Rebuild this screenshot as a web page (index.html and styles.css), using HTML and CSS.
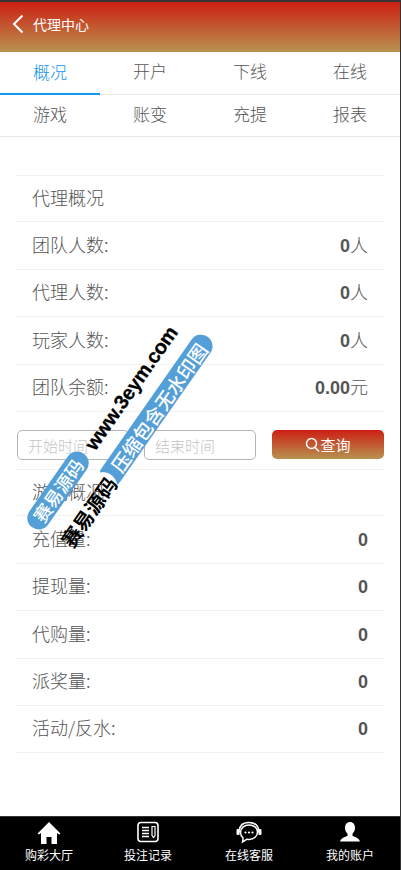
FILE: index.html
```html
<!DOCTYPE html>
<html lang="zh">
<head>
<meta charset="utf-8">
<title>代理中心</title>
<link rel="stylesheet" href="styles.css">
</head>
<body>
<div class="app">
  <header class="header">
    <svg class="back" width="12" height="20" viewBox="0 0 12 20"><path d="M10.500 1.500 2 10l8.500 8.500" fill="none" stroke="#fff" stroke-width="2"/></svg>
    <span class="title">代理中心</span>
  </header>
  <nav class="tabs">
    <a class="tab active">概况</a><a class="tab">开户</a><a class="tab">下线</a><a class="tab">在线</a>
  </nav>
  <nav class="tabs second">
    <a class="tab">游戏</a><a class="tab">账变</a><a class="tab">充提</a><a class="tab">报表</a>
  </nav>
  <main class="content">
    <div class="row heading"><span>代理概况</span></div>
    <div class="row"><span>团队人数:</span><span class="val"><b>0</b>人</span></div>
    <div class="row"><span>代理人数:</span><span class="val"><b>0</b>人</span></div>
    <div class="row"><span>玩家人数:</span><span class="val"><b>0</b>人</span></div>
    <div class="row"><span>团队余额:</span><span class="val"><b>0.00</b>元</span></div>
    <div class="filter">
      <input class="date" placeholder="开始时间">
      <input class="date" placeholder="结束时间">
      <button class="query">
        <svg width="15" height="16" viewBox="0 0 15 16"><circle cx="6.500" cy="6.500" r="5" fill="none" stroke="#fff" stroke-width="1.500"/><path d="m10 10.500 4 4" stroke="#fff" stroke-width="1.500"/></svg>查询
      </button>
    </div>
    <div class="row heading"><span>游戏概况</span></div>
    <div class="row"><span>充值量:</span><span class="val"><b>0</b></span></div>
    <div class="row"><span>提现量:</span><span class="val"><b>0</b></span></div>
    <div class="row"><span>代购量:</span><span class="val"><b>0</b></span></div>
    <div class="row"><span>派奖量:</span><span class="val"><b>0</b></span></div>
    <div class="row last"><span>活动/反水:</span><span class="val"><b>0</b></span></div>
  </main>
  <footer class="bottom">
    <a class="item i1">
      <svg width="24" height="24" viewBox="0 0 24 24"><path d="M12 1 .5 12.500 2 13.500 4 12v11h5.500v-7h5v7H20V12l2 1.500 1.500-1z" fill="#fff"/></svg>
      <span>购彩大厅</span>
    </a>
    <a class="item i2">
      <svg width="24" height="24" viewBox="0 0 24 24"><rect x="2" y="1.500" width="20" height="19" rx="3" fill="none" stroke="#fff" stroke-width="1.600"/><path d="M6 6.500h7M6 9.500h7M6 12.500h7M6 15.500h7" stroke="#fff" stroke-width="1.400"/><path d="M16 5.500h3v9l-1.500 2-1.500-2z" fill="none" stroke="#fff" stroke-width="1.200"/></svg>
      <span>投注记录</span>
    </a>
    <a class="item i3">
      <svg width="28" height="24" viewBox="0 0 28 24"><path d="M4 12C4 5 8 1.500 14 1.500S24 5 24 12" fill="none" stroke="#fff" stroke-width="1.500"/><path d="M2.500 8h2v6h-2a1.500 1.500 0 0 1-1-1V9a1.500 1.500 0 0 1 1-1zM25.500 8h-2v6h2a1.500 1.500 0 0 0 1-1V9a1.500 1.500 0 0 0-1-1z" fill="#fff"/><path d="M14 4c-5 0-8.500 3.300-8.500 7.500 0 2.300 1 4.200 2.600 5.500L7.500 21l4.500-2.800c.7.100 1.300.200 2 .200 5 0 8.500-3.200 8.500-7.400S19 4 14 4z" fill="none" stroke="#fff" stroke-width="1.500"/><circle cx="10.500" cy="11.500" r="1.100" fill="#fff"/><circle cx="14" cy="11.500" r="1.100" fill="#fff"/><circle cx="17.500" cy="11.500" r="1.100" fill="#fff"/></svg>
      <span>在线客服</span>
    </a>
    <a class="item i4">
      <svg width="24" height="24" viewBox="0 0 24 24"><path d="M12 1c3 0 5 2.300 5 5.800 0 2.700-1.100 4.700-2.500 5.900v2c1.300 1.100 6.500 1.600 7.500 5.800H2c1-4.200 6.200-4.700 7.500-5.800v-2C8.100 11.500 7 9.500 7 6.800 7 3.300 9 1 12 1z" fill="#fff"/></svg>
      <span>我的账户</span>
    </a>
  </footer>
  <div class="wm wm-url">www.3eym.com</div>
  <div class="wm wm-pill wm-long">压缩包含无水印图</div>
  <div class="wm wm-pill wm-short">赛易源码</div>
  <div class="wm wm-cn">赛易源码</div>
</div>
</body>
</html>
```

FILE: styles.css
```css
* { box-sizing: border-box; }
html, body { margin: 0; padding: 0; }
body { font-family: "Noto Sans CJK SC", "Liberation Sans", sans-serif; font-weight: 300; color: #555; background: #333; }
.app { position: relative; width: 400px; height: 870px; display: flex; flex-direction: column; border-top: 2px solid #333; overflow: hidden; background: #fff; }
.header { height: 50px; flex: none; display: flex; align-items: center; gap: 9px; padding: 0 0 6px 12px; background: linear-gradient(#cc1f14, #b8934f); color: #fff; font-size: 14px; font-weight: 400; }
.tabs { display: flex; flex: none; height: 43px; border-bottom: 1px solid #e8e8e8; }
.tabs.second { height: 42px; }
.tab { width: 100px; display: flex; align-items: center; justify-content: center; font-size: 17px; padding-bottom: 5px; }
.second .tab { padding-bottom: 4px; }
.tab.active { color: #1296f0; box-shadow: inset 0 -2px 0 #1296f0; height: 43px; }
.content { flex: 1; padding: 38px 16px 0; }
.row { height: 47.500px; display: flex; justify-content: space-between; align-items: center; padding: 0 16px 3px; border-top: 1px solid #f2f2f2; font-size: 18px; }
.row.heading { height: 46px; }
.row.last { border-bottom: 1px solid #f2f2f2; }
.val b { font-family: "Liberation Sans", sans-serif; font-weight: 700; }
.filter { height: 58px; display: flex; align-items: flex-start; border-top: 1px solid #f2f2f2; padding: 18px 0 0 1px; gap: 15px; }
.date { width: 112px; height: 30px; border: 1px solid #b5b5b5; border-radius: 5px; padding: 0 10px; font: 300 15px "Noto Sans CJK SC", sans-serif; background: #fff; }
.date::placeholder { color: #c4c4c4; }
.query { margin-left: 1px; width: 112px; height: 29px; border: 0; border-radius: 5px; background: linear-gradient(#cc1f14, #b8934f); color: #fff; font: 15px "Noto Sans CJK SC", sans-serif; display: flex; align-items: center; justify-content: center; padding: 0; }
.bottom { flex: none; height: 54px; background: #000; border-top: 1px solid #333; display: flex; }
.item { display: flex; flex-direction: column; align-items: center; color: #fff; font-size: 12px; font-weight: 400; line-height: 16px; padding-top: 4px; }
.i1 { width: 98px; }
.i2 { width: 100px; }
.i3 { width: 102px; }
.i4 { width: 100px; }
.item svg { display: block; height: 24px; margin-bottom: 2px; }
.wm { position: absolute; transform: rotate(-55deg); white-space: nowrap; font-weight: 700; text-align: center; }
.wm-url { left: 56px; top: 374px; width: 150px; color: #000; font: 700 20px/24px "Liberation Sans", sans-serif; letter-spacing: -.3px; -webkit-text-stroke: .3px #000; }
.wm-pill { color: #fff; border-radius: 12px; height: 23px; line-height: 23px; font-weight: 500; }
.wm-long { left: 66px; top: 397px; width: 180px; padding-left: 8px; font-size: 19px; background: radial-gradient(circle at -3px 50%, transparent 14px, #559fd8 15px); }
.wm-short { left: 13px; top: 477px; width: 90px; font-size: 18px; background: #559fd8; }
.wm-cn { left: 49px; top: 498px; width: 80px; color: #000; font-size: 20px; line-height: 24px; }
```
